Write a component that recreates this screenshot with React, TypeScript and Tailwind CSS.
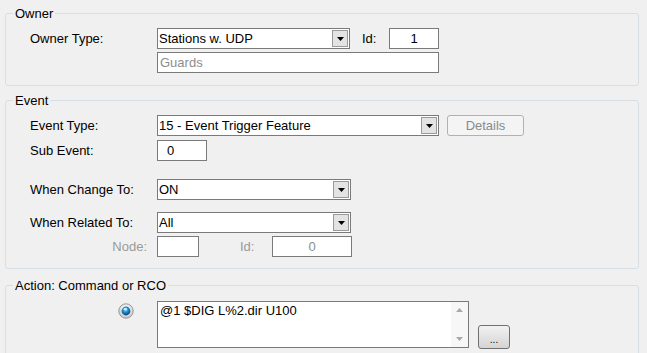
import type { ReactNode } from "react";

// small black arrow used by the combo boxes
function DownArrow() {
  return (
    <svg width="7" height="4" viewBox="0 0 7 4">
      <path d="M0 0h7L3.5 4z" fill="#000" />
    </svg>
  );
}

function Combo({ value, className }: { value: string; className: string }) {
  return (
    <div className={`flex h-[21px] border border-[#7a7a7a] bg-white ${className}`}>
      <div className="flex-1 pl-[1px] leading-[19px] whitespace-nowrap overflow-hidden">{value}</div>
      <div className="w-[16px] m-[1px] ml-0 flex items-center justify-center border border-[#9a9a9a] bg-[#e3e3e3]">
        <DownArrow />
      </div>
    </div>
  );
}

function TextBox({
  value,
  className,
  muted,
  center,
}: {
  value?: string;
  className: string;
  muted?: boolean;
  center?: boolean;
}) {
  return (
    <div
      className={`h-[21px] border border-[#7a7a7a] bg-white leading-[19px] whitespace-nowrap ${
        muted ? "text-[#8d8d8d]" : "text-black"
      } ${center ? "text-center" : "pl-[2px]"} ${className}`}
    >
      {value}
    </div>
  );
}

function Group({ title, children, className }: { title: string; children: ReactNode; className: string }) {
  return (
    <fieldset className={`border border-[#d5dfe5] rounded-[3px] ${className}`}>
      <legend className="ml-[7px] px-[2px] leading-[15px]">{title}</legend>
      <div className="pl-[24px]">{children}</div>
    </fieldset>
  );
}

function Label({ children }: { children: ReactNode }) {
  return <div className="w-[127px] shrink-0 leading-[21px]">{children}</div>;
}

export default function App() {
  return (
    <div
      className="w-[647px] h-[353px] overflow-hidden bg-[#f0f0f0] pt-[6px] pl-[5px] pr-[8px] text-[13px] text-black"
      style={{ fontFamily: '"Liberation Sans", Arial, sans-serif' }}
    >
      <Group title="Owner" className="pt-[7px] pb-[12px]">
        <div className="flex items-center">
          <Label>Owner Type:</Label>
          <Combo value="Stations w. UDP" className="w-[193px]" />
          <div className="w-[39px] pl-[12px] leading-[21px]">Id:</div>
          <TextBox value="1" center className="w-[50px]" />
        </div>
        <div className="flex mt-[3px]">
          <div className="w-[127px] shrink-0" />
          <TextBox value="Guards" muted className="w-[282px]" />
        </div>
      </Group>

      <Group title="Event" className="mt-[7px] pt-[7px] pb-[11px]">
        <div className="flex items-center">
          <Label>Event Type:</Label>
          <Combo value="15 - Event Trigger Feature" className="w-[282px]" />
          <button className="ml-[8px] w-[77px] h-[21px] rounded-[3px] border border-[#adb2b5] bg-[#f4f4f4] text-[#8a8a8a]">
            Details
          </button>
        </div>
        <div className="flex mt-[4px]">
          <Label>Sub Event:</Label>
          <TextBox value="0" className="w-[50px] !pl-[9px]" />
        </div>
        <div className="flex mt-[18px]">
          <Label>When Change To:</Label>
          <Combo value="ON" className="w-[194px]" />
        </div>
        <div className="flex mt-[12px]">
          <Label>When Related To:</Label>
          <Combo value="All" className="w-[194px]" />
        </div>
        <div className="flex mt-[3px]">
          <div className="w-[117px] shrink-0 text-right leading-[21px] text-[#9a9a9a]">Node:</div>
          <div className="w-[10px] shrink-0" />
          <TextBox className="w-[42px]" />
          <div className="w-[73px] pl-[41px] leading-[21px] text-[#9a9a9a]">Id:</div>
          <TextBox value="0" muted center className="w-[80px]" />
        </div>
      </Group>

      <Group title="Action: Command or RCO" className="mt-[9px] pt-[8px] pb-[20px]">
        <div className="flex">
          <div className="w-[127px] shrink-0 flex justify-end pr-[23px] pt-[2px]">
            <svg width="16" height="16" viewBox="0 0 16 16">
              <defs>
                <radialGradient id="ring" cx="50%" cy="30%" r="70%">
                  <stop offset="0" stopColor="#fdfdfd" />
                  <stop offset="1" stopColor="#c9c9c9" />
                </radialGradient>
                <radialGradient id="dot" cx="45%" cy="35%" r="65%">
                  <stop offset="0" stopColor="#8fe0ff" />
                  <stop offset="0.45" stopColor="#1f8fd2" />
                  <stop offset="1" stopColor="#0c3f73" />
                </radialGradient>
              </defs>
              <circle cx="8" cy="8" r="7.2" fill="url(#ring)" stroke="#8c8c8c" strokeWidth="0.9" />
              <circle cx="8" cy="8" r="4.4" fill="url(#dot)" />
              <ellipse cx="7.3" cy="6.2" rx="1.8" ry="1.1" fill="#e8f8ff" opacity="0.8" />
            </svg>
          </div>
          <div className="w-[312px] h-[47px] flex border border-[#7a7a7a] bg-white">
            <div className="flex-1 pl-[2px] leading-[17px]">@1 $DIG L%2.dir U100</div>
            <div className="w-[17px] bg-[#f7f7f7] flex flex-col items-center justify-between py-[6px]">
              <svg width="7" height="4" viewBox="0 0 7 4">
                <path d="M3.5 0L7 4H0z" fill="#a8a8a8" />
              </svg>
              <svg width="7" height="4" viewBox="0 0 7 4">
                <path d="M0 0h7L3.5 4z" fill="#a8a8a8" />
              </svg>
            </div>
          </div>
          <div className="ml-[9px] mt-[24px] w-[32px] h-[24px] rounded-[3px] border border-[#707070] bg-gradient-to-b from-[#f2f2f2] to-[#d4d4d4] flex items-end justify-center pb-[3px] text-[10px] leading-[10px]">
            ...
          </div>
        </div>
      </Group>
    </div>
  );
}
